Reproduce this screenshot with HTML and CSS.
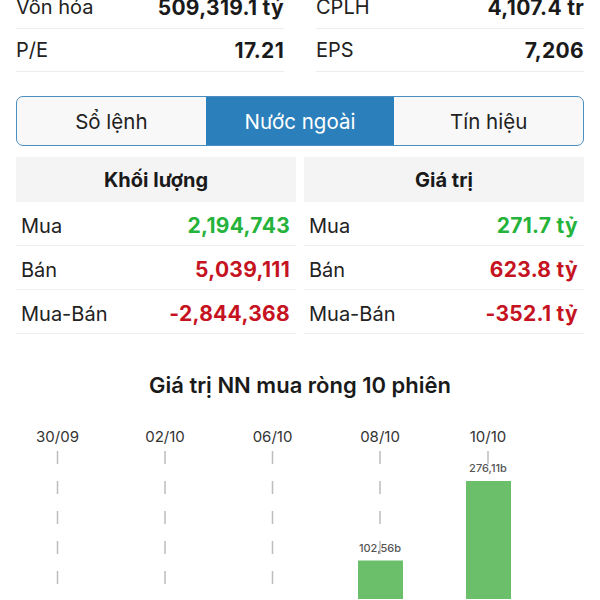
FILE: index.html
```html
<!DOCTYPE html>
<html lang="vi">
<head>
    <meta charset="UTF-8">
    <meta name="viewport" content="width=device-width, initial-scale=1.0">
    <title>Nước ngoài</title>
    <link rel="stylesheet" href="styles.css">
</head>

<body>
    <div class="stats">
        <div class="stats-col">
            <div class="stat-row"><span>Vốn hóa</span><b>509,319.1 tỷ</b></div>
            <div class="stat-row"><span>P/E</span><b>17.21</b></div>
        </div>
        <div class="stats-col">
            <div class="stat-row"><span>CPLH</span><b>4,107.4 tr</b></div>
            <div class="stat-row"><span>EPS</span><b>7,206</b></div>
        </div>
    </div>

    <div class="segment">
        <div class="segment-item">Sổ lệnh</div>
        <div class="segment-item active">Nước ngoài</div>
        <div class="segment-item">Tín hiệu</div>
    </div>

    <div class="flow">
        <div class="flow-col">
            <div class="flow-head">Khối lượng</div>
            <div class="flow-row"><span>Mua</span><b class="up">2,194,743</b></div>
            <div class="flow-row"><span>Bán</span><b class="down">5,039,111</b></div>
            <div class="flow-row"><span>Mua-Bán</span><b class="down">-2,844,368</b></div>
        </div>
        <div class="flow-col">
            <div class="flow-head">Giá trị</div>
            <div class="flow-row"><span>Mua</span><b class="up">271.7 tỷ</b></div>
            <div class="flow-row"><span>Bán</span><b class="down">623.8 tỷ</b></div>
            <div class="flow-row"><span>Mua-Bán</span><b class="down">-352.1 tỷ</b></div>
        </div>
    </div>

    <h3 class="chart-title">Giá trị NN mua ròng 10 phiên</h3>

    <svg class="chart" width="600" height="200" viewBox="0 0 600 200">
        <g class="grid">
            <line x1="57.5" y1="52" x2="57.5" y2="200"/>
            <line x1="165" y1="52" x2="165" y2="200"/>
            <line x1="272.5" y1="52" x2="272.5" y2="200"/>
            <line x1="380" y1="52" x2="380" y2="200"/>
            <line x1="488" y1="52" x2="488" y2="200"/>
        </g>
        <g class="dates">
            <text x="57.5" y="43">30/09</text>
            <text x="165" y="43">02/10</text>
            <text x="272.5" y="43">06/10</text>
            <text x="380" y="43">08/10</text>
            <text x="488" y="43">10/10</text>
        </g>
        <g class="bars">
            <rect x="358" y="161.5" width="45" height="40"/>
            <rect x="466" y="82" width="45" height="120"/>
        </g>
        <g class="bar-labels">
            <text x="380" y="153">102,56b</text>
            <text x="488" y="73">276,11b</text>
        </g>
    </svg>
</body>
</html>
```

FILE: styles.css
```css
body {
    margin: 0;
    background-color: white;
    font-family: Inter, "Noto Sans", sans-serif;
    color: #222;
    overflow: hidden;
}

/* Thông tin cơ bản */
.stats {
    display: flex;
    gap: 32px;
    margin: -14px 16px 0;
}

.stats-col {
    flex: 1;
}

.stat-row {
    display: flex;
    justify-content: space-between;
    align-items: center;
    height: 42px;
    border-bottom: 1px solid #ececec;
    font-size: 20px;
}

.stat-row b {
    font-size: 21px;
    font-weight: 700;
    letter-spacing: 0.3px;
    color: #1a1a1a;
}

/* Tabs */
.segment {
    display: flex;
    margin: 24px 16px 0;
    height: 48px;
    border: 1.5px solid #4a8ec2;
    border-radius: 7px;
    overflow: hidden;
    background-color: #f8f8f8;
}

.segment-item {
    flex: 1;
    display: flex;
    align-items: center;
    justify-content: center;
    font-size: 20.5px;
    color: #222;
}

.segment-item.active {
    background-color: #2b7fbb;
    color: white;
}

/* Khối ngoại */
.flow {
    display: flex;
    gap: 8px;
    margin: 11px 16px 0;
}

.flow-col {
    flex: 1;
}

.flow-head {
    height: 45px;
    display: flex;
    align-items: center;
    justify-content: center;
    background-color: #f4f4f4;
    font-size: 20px;
    font-weight: 700;
    color: #1a1a1a;
}

.flow-row {
    box-sizing: border-box;
    display: flex;
    justify-content: space-between;
    align-items: center;
    height: 44px;
    padding: 4px 6px 0 5px;
    border-bottom: 1px solid #efefef;
    font-size: 20px;
}

.flow-row b {
    font-size: 21px;
    font-weight: 700;
    letter-spacing: 0.3px;
}

.up {
    color: #25b33b;
}

.down {
    color: #c5131f;
}

/* Biểu đồ */
.chart-title {
    margin: 37px 0 0;
    height: 28px;
    line-height: 28px;
    text-align: center;
    font-size: 22px;
    font-weight: 600;
    color: #1a1a1a;
}

.chart {
    display: block;
}

.grid line {
    stroke: #bdbdbd;
    stroke-width: 1.5;
    stroke-dasharray: 13 17;
}

.dates text {
    font-family: Inter, sans-serif;
    font-size: 15px;
    fill: #333;
    text-anchor: middle;
}

.bars rect {
    fill: #6cbf6a;
}

.bar-labels text {
    font-family: Inter, sans-serif;
    font-size: 11px;
    font-weight: 500;
    fill: #555;
    text-anchor: middle;
}
```
